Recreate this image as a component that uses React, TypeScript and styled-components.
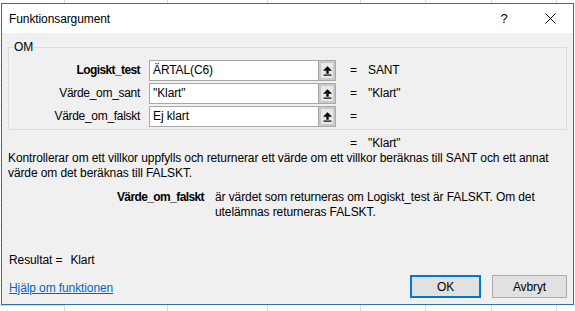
import styled, { createGlobalStyle } from 'styled-components'

const GlobalStyle = createGlobalStyle`
	html, body {
		margin: 0;
		padding: 0;
		background: #ffffff;
	}
	body {
		font-family: 'Liberation Sans', Arial, sans-serif;
		font-size: 12px;
		letter-spacing: -0.1px;
		color: #000000;
	}
`

const sheetColumns = [64, 102, 99, 92, 64, 65, 64, 25]

const args = [
	{ name: 'Logiskt_test', value: 'ÄRTAL(C6)', result: 'SANT', required: true },
	{ name: 'Värde_om_sant', value: '"Klart"', result: '"Klart"', required: false },
	{ name: 'Värde_om_falskt', value: 'Ej klart', result: '', required: false },
]

const RefIcon = () => (
	<svg width="9" height="10" viewBox="0 0 9 10">
		<polygon points="0,4.8 4.5,0.3 9,4.8" fill="#000" />
		<rect x="3.3" y="4.5" width="2.4" height="3.2" fill="#000" />
		<rect x="0.5" y="8.5" width="8" height="1.2" fill="#000" />
	</svg>
)

const CloseIcon = () => (
	<svg width="11" height="11" viewBox="0 0 11 11">
		<path d="M0.5 0.5 L10.5 10.5 M10.5 0.5 L0.5 10.5" stroke="#000" strokeWidth="1" />
	</svg>
)

export default function App() {
	return (
		<Page>
			<GlobalStyle />
			<Sheet>
				{sheetColumns.map((w, i) => (
					<SheetColumn key={i} $width={w} />
				))}
			</Sheet>
			<Dialog>
				<TitleBar>
					<Title>Funktionsargument</Title>
					<CaptionButton>?</CaptionButton>
					<CaptionButton>
						<CloseIcon />
					</CaptionButton>
				</TitleBar>
				<Body>
					<Group>
						<Legend>OM</Legend>
						<ArgGrid>
							{args.map((a) => (
								<ArgRow key={a.name}>
									<ArgLabel $bold={a.required}>{a.name}</ArgLabel>
									<InputBox>
										<InputText>{a.value}</InputText>
										<RefButton>
											<RefIcon />
										</RefButton>
									</InputBox>
									<ValueCell>
										<Equals>=</Equals>
										<span>{a.result}</span>
									</ValueCell>
								</ArgRow>
							))}
						</ArgGrid>
					</Group>
					<FormulaResult>
						<Equals>=</Equals>
						<span>"Klart"</span>
					</FormulaResult>
					<Description>
						Kontrollerar om ett villkor uppfylls och returnerar ett värde om ett villkor beräknas till SANT och ett annat
						värde om det beräknas till FALSKT.
					</Description>
					<ArgHelp>
						<ArgHelpName>Värde_om_falskt</ArgHelpName>
						<ArgHelpText>
							är värdet som returneras om Logiskt_test är FALSKT. Om det utelämnas returneras FALSKT.
						</ArgHelpText>
					</ArgHelp>
					<Spacer />
					<ResultLine>
						Resultat =<ResultValue>Klart</ResultValue>
					</ResultLine>
					<Footer>
						<HelpLink href="#">Hjälp om funktionen</HelpLink>
						<ButtonBox>
							<DialogButton $primary>OK</DialogButton>
							<DialogButton>Avbryt</DialogButton>
						</ButtonBox>
					</Footer>
				</Body>
			</Dialog>
		</Page>
	)
}

const Page = styled.div`
	position: relative;
	width: 575px;
	height: 311px;
	overflow: hidden;
`

const Sheet = styled.div`
	display: flex;
	height: 100%;
	background-image: repeating-linear-gradient(
		to bottom,
		transparent 0,
		transparent 19px,
		#d9d9d9 19px,
		#d9d9d9 20px
	);
	background-position: 0 6px;
`

const SheetColumn = styled.div<{ $width: number }>`
	flex: 0 0 ${(p) => p.$width}px;
	border-right: 1px solid #d9d9d9;
	background: #ffffff;
	&:first-child {
		background: transparent;
	}
`

const Dialog = styled.div`
	position: absolute;
	left: 1px;
	top: 3px;
	width: 573px;
	height: 302px;
	box-sizing: border-box;
	border: 1px solid #2f6fae;
	background: #f0f0f0;
	display: flex;
	flex-direction: column;
`

const TitleBar = styled.div`
	height: 29px;
	background: #ffffff;
	display: flex;
	align-items: center;
	flex-shrink: 0;
`

const Title = styled.div`
	flex: 1;
	padding-left: 7px;
	font-size: 12px;
	color: #000000;
`

const CaptionButton = styled.div`
	width: 46px;
	height: 29px;
	display: flex;
	align-items: center;
	justify-content: center;
	font-size: 13px;
`

const Body = styled.div`
	flex: 1;
	display: flex;
	flex-direction: column;
	padding: 0 6px 6px 6px;
	line-height: 15px;
`

const Group = styled.div`
	position: relative;
	margin-top: 14px;
	height: 83px;
	box-sizing: border-box;
	border: 1px solid #dcdcdc;
	padding-top: 12px;
`

const Legend = styled.span`
	position: absolute;
	top: -8px;
	left: 4px;
	padding: 0 1px;
	background: #f0f0f0;
	line-height: 15px;
`

const ArgGrid = styled.div`
	display: flex;
	flex-direction: column;
	gap: 2px;
`

const ArgRow = styled.div`
	display: grid;
	grid-template-columns: 131px 187px 1fr;
	column-gap: 9px;
	align-items: center;
	height: 21px;
`

const ArgLabel = styled.div<{ $bold?: boolean }>`
	text-align: right;
	font-weight: ${(p) => (p.$bold ? 700 : 400)};
	letter-spacing: ${(p) => (p.$bold ? '-0.6px' : '-0.3px')};
`

const InputBox = styled.div`
	display: flex;
	height: 21px;
	box-sizing: border-box;
	border: 1px solid #a8a8a8;
	background: #ffffff;
`

const InputText = styled.div`
	flex: 1;
	padding-left: 3px;
	line-height: 19px;
	white-space: nowrap;
	overflow: hidden;
`

const RefButton = styled.div`
	width: 16px;
	display: flex;
	align-items: center;
	justify-content: center;
	background: #e8e8e8;
	border-left: 1px solid #a8a8a8;
	box-shadow: inset 0 0 0 2px #c9c9c9;
`

const ValueCell = styled.div`
	display: flex;
	padding-left: 5px;
`

const Equals = styled.span`
	width: 7px;
	margin-right: 11px;
`

const FormulaResult = styled.div`
	display: flex;
	margin-top: 6px;
	padding-left: 342px;
`

const Description = styled.div`
	padding-right: 4px;
`

const ArgHelp = styled.div`
	display: grid;
	grid-template-columns: 196px 330px;
	column-gap: 11px;
	margin-top: 9px;
`

const ArgHelpName = styled.div`
	text-align: right;
	font-weight: 700;
	letter-spacing: -0.6px;
`

const ArgHelpText = styled.div``

const Spacer = styled.div`
	flex: 1;
`

const ResultLine = styled.div`
	padding-left: 1px;
`

const ResultValue = styled.span`
	margin-left: 8px;
`

const Footer = styled.div`
	display: flex;
	align-items: center;
	justify-content: space-between;
	margin-top: 7px;
`

const HelpLink = styled.a`
	padding-left: 1px;
	margin-top: 3px;
	color: #0066cc;
	text-decoration: underline;
`

const ButtonBox = styled.div`
	display: flex;
	gap: 11px;
`

const DialogButton = styled.button<{ $primary?: boolean }>`
	width: ${(p) => (p.$primary ? 71 : 75)}px;
	height: 23px;
	box-sizing: border-box;
	padding: 0;
	font-family: 'Liberation Sans', Arial, sans-serif;
	font-size: 12px;
	letter-spacing: -0.1px;
	color: #000000;
	background: #e1e1e1;
	border: ${(p) => (p.$primary ? '2px solid #0078d7' : '1px solid #adadad')};
`
